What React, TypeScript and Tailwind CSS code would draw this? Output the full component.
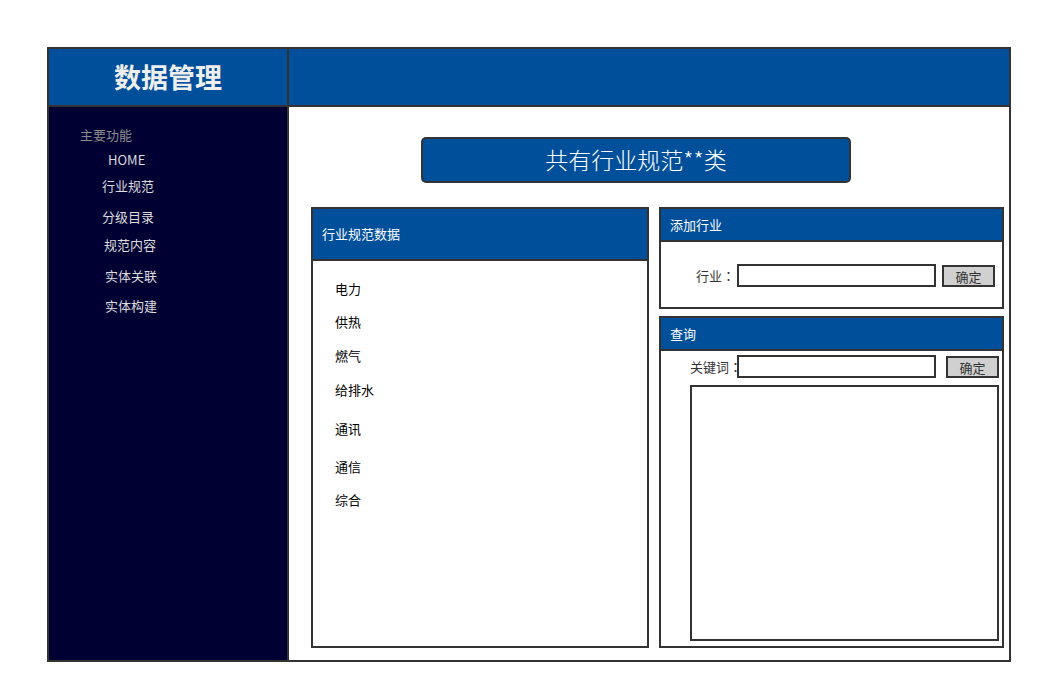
import React from "react";

const industries = [
  { name: "电力", cls: "mt-0" },
  { name: "供热", cls: "mt-[13px]" },
  { name: "燃气", cls: "mt-[14px]" },
  { name: "给排水", cls: "mt-[14px]" },
  { name: "通讯", cls: "mt-[19px]" },
  { name: "通信", cls: "mt-[18px]" },
  { name: "综合", cls: "mt-[13px]" },
];

const menu = [
  { name: "HOME", cls: "mt-[5px] ml-[59px]" },
  { name: "行业规范", cls: "mt-[6px] ml-[53px]" },
  { name: "分级目录", cls: "mt-[11px] ml-[53px]" },
  { name: "规范内容", cls: "mt-[8px] ml-[55px]" },
  { name: "实体关联", cls: "mt-[11px] ml-[56px]" },
  { name: "实体构建", cls: "mt-[10px] ml-[56px]" },
];

// fullwidth colon centred in its box, as in the mockup
const Colon = () => <span className="font-['Noto_Sans_CJK_TC',sans-serif]">：</span>;

const App: React.FC = () => {
  return (
    <div className="w-[1043px] h-[694px] bg-white pt-[47px] pl-[47px] font-['Noto_Sans_CJK_SC','Liberation_Sans',sans-serif]">
      <div className="w-[964px] h-[615px] border-2 border-[#333] flex flex-col">
        {/* Top bar */}
        <div className="h-[58px] flex bg-[#004f9b] border-b-2 border-[#333]">
          <div className="w-[240px] border-r-2 border-[#333] flex items-center justify-center">
            <span className="text-[27px] font-bold text-[#eeeeee] leading-none -mt-[1px]">数据管理</span>
          </div>
          <div className="flex-1" />
        </div>

        <div className="flex-1 flex">
          {/* Sidebar */}
          <div className="w-[240px] border-r-2 border-[#333] bg-[#000033] flex flex-col text-[13px] leading-[20px]">
            <div className="mt-[18px] ml-[31px] text-[#8c8c8c]">主要功能</div>
            {menu.map((m) => (
              <div key={m.name} className={`${m.cls} text-[#dcdcdc]`}>
                {m.name}
              </div>
            ))}
          </div>

          {/* Main */}
          <div className="flex-1 flex flex-col">
            <div className="mt-[30px] ml-[132px] w-[430px] h-[46px] rounded-[5px] border-2 border-[#333] bg-[#004f9b] flex items-center justify-center">
              <span className="text-[23px] leading-none font-light text-white -mt-[2px]">共有行业规范**类</span>
            </div>

            <div className="mt-[24px] ml-[22px] flex gap-[10px]">
              {/* Industry list */}
              <div className="w-[338px] h-[441px] border-2 border-[#333] flex flex-col">
                <div className="h-[52px] border-b-2 border-[#333] bg-[#004f9b] flex items-center pl-[9px] text-[13px] text-white">
                  行业规范数据
                </div>
                <div className="pt-[18px] pl-[22px] flex flex-col text-[13px] leading-[20px] text-black">
                  {industries.map((i) => (
                    <div key={i.name} className={i.cls}>
                      {i.name}
                    </div>
                  ))}
                </div>
              </div>

              <div className="w-[345px] flex flex-col gap-[7px]">
                {/* Add industry */}
                <div className="h-[102px] border-2 border-[#333] flex flex-col">
                  <div className="h-[33px] border-b-2 border-[#333] bg-[#004f9b] flex items-center pl-[9px] text-[13px] text-white">
                    添加行业
                  </div>
                  <div className="pt-[22px] pl-[35px] flex items-start text-[13px] text-[#333]">
                    <span className="leading-[23px] whitespace-nowrap">
                      行业<Colon />
                    </span>
                    <input
                      type="text"
                      className="relative ml-[2px] w-[199px] h-[23px] border-2 border-[#333] bg-white outline-none"
                    />
                    <button className="ml-[6px] mt-[1px] w-[53px] h-[22px] border-2 border-[#333] bg-[#d0d0d0] text-[13px] leading-none text-[#333]">
                      确定
                    </button>
                  </div>
                </div>

                {/* Query */}
                <div className="h-[332px] border-2 border-[#333] flex flex-col">
                  <div className="h-[33px] border-b-2 border-[#333] bg-[#004f9b] flex items-center pl-[9px] text-[13px] text-white">
                    查询
                  </div>
                  <div className="pt-[4px] pl-[29px] flex flex-col">
                    <div className="flex items-start text-[13px] text-[#333]">
                      <span className="w-[47px] leading-[23px] whitespace-nowrap">
                        关键词<Colon />
                      </span>
                      <input
                        type="text"
                        className="relative w-[199px] h-[23px] border-2 border-[#333] bg-white outline-none"
                      />
                      <button className="ml-[10px] mt-[1px] w-[53px] h-[22px] border-2 border-[#333] bg-[#d0d0d0] text-[13px] leading-none text-[#333]">
                        确定
                      </button>
                    </div>
                    <textarea className="mt-[7px] w-[309px] h-[256px] border-2 border-[#333] bg-white resize-none outline-none" />
                  </div>
                </div>
              </div>
            </div>
          </div>
        </div>
      </div>
    </div>
  );
};

export default App;
